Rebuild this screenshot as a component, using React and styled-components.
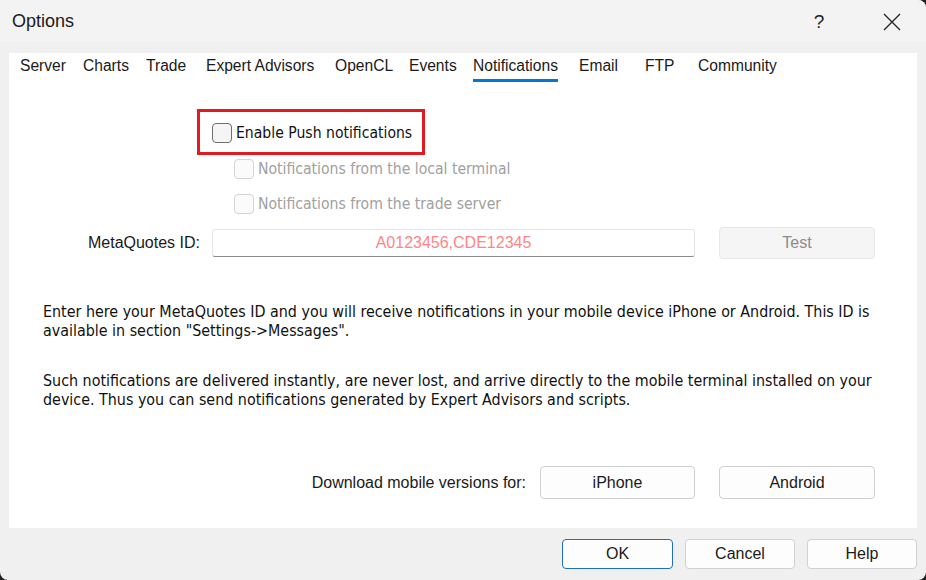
import styled, { createGlobalStyle } from 'styled-components';

const Global = createGlobalStyle`
    html, body {
        margin: 0;
        padding: 0;
        background: #202020;
    }
    #root {
        width: 926px;
        height: 580px;
    }
`

const UI = `"Liberation Sans", "Noto Sans", sans-serif`
const TAHOMA = `"DejaVu Sans Condensed", "DejaVu Sans", sans-serif`

const Window = styled.div`
    width: 926px;
    height: 580px;
    background: #f0f0f0;
    border-radius: 0 8px 8px 8px;
    overflow: hidden;
    display: flex;
    flex-direction: column;
    font-family: ${UI};
    color: #1a1a1a;
`

const TitleBar = styled.div`
    height: 43px;
    flex: none;
    background: #f3f3f3;
    display: flex;
    align-items: center;
    padding-left: 12px;
`

const Title = styled.div`
    font-size: 18px;
    flex: 1;
`

const TitleButton = styled.div`
    width: ${p => p.w}px;
    margin-right: ${p => p.mr || 0}px;
    display: flex;
    justify-content: center;
    align-items: center;
    font-size: 19px;
    color: #222;
`

const Panel = styled.div`
    margin: 10px 9px 0;
    height: 475px;
    flex: none;
    background: #fff;
    display: flex;
    flex-direction: column;
`

const TabBar = styled.div`
    height: 30px;
    display: flex;
    padding-left: 11px;
`

const Tab = styled.div`
    width: ${p => p.w}px;
    flex: none;
    padding-top: 4px;
    font-size: 15.6px;
    white-space: nowrap;
`

const TabLabel = styled.span`
    position: relative;
    display: inline-block;
    ${p => p.active && `
        &::after {
            content: '';
            position: absolute;
            left: 0;
            right: 0;
            top: 22px;
            height: 3px;
            background: #0078d4;
        }
    `}
`

const PushBox = styled.div`
    margin: 26px 0 0 188px;
    width: 228px;
    height: 46px;
    box-sizing: border-box;
    border: 3px solid #e11b22;
    display: flex;
    align-items: center;
    padding: 2px 0 0 12px;
`

const CheckRow = styled.label`
    display: flex;
    align-items: center;
    gap: 4px;
    height: 24px;
    margin: ${p => p.top}px 0 0 ${p => p.left}px;
    font-family: ${TAHOMA};
    font-size: 15.6px;
    color: ${p => p.disabled ? '#a0a0a0' : '#111'};
`

const Box = styled.span`
    width: 18px;
    height: 18px;
    border-radius: 4px;
    border: 1px solid ${p => p.disabled ? '#d4d4d4' : '#6e6e6e'};
    background: ${p => p.disabled ? '#fbfbfb' : '#f5f5f5'};
    flex: none;
`

const IdRow = styled.div`
    margin-top: 11px;
    height: 32px;
    display: flex;
    align-items: center;
`

const FieldLabel = styled.div`
    width: ${p => p.w}px;
    text-align: right;
    font-size: 16px;
    flex: none;
`

const Input = styled.div`
    margin-left: 12px;
    width: 483px;
    height: 28px;
    box-sizing: border-box;
    border: 1px solid #e6e6e6;
    border-bottom-color: #8a8a8a;
    border-radius: 3px;
    display: flex;
    align-items: center;
    justify-content: center;
    font-size: 16px;
    color: #ff8585;
`

const Button = styled.div`
    width: ${p => p.w}px;
    height: ${p => p.h || 33}px;
    margin-left: ${p => p.gap || 0}px;
    box-sizing: border-box;
    border: 1px solid ${p => p.primary ? '#1e6fc0' : p.disabled ? '#e8e8e8' : '#d0d0d0'};
    border-radius: 4px;
    background: ${p => p.disabled ? '#f5f5f5' : '#fdfdfd'};
    color: ${p => p.disabled ? '#8c8c8c' : '#1a1a1a'};
    display: flex;
    align-items: center;
    justify-content: center;
    font-size: 16px;
    flex: none;
`

const Paragraph = styled.p`
    margin: ${p => p.top}px 0 0 34px;
    font-family: ${TAHOMA};
    font-size: 15.9px;
    line-height: 19px;
    width: 860px;
    color: #111;
`

const DownloadRow = styled.div`
    margin-top: 57px;
    display: flex;
    align-items: center;
    height: 33px;
`

const Footer = styled.div`
    flex: 1;
    display: flex;
    justify-content: flex-end;
    align-items: flex-start;
    padding: 11px 9px 0 0;
    gap: 12px;
`

const CloseIcon = () => (
    <svg width="18" height="18" viewBox="0 0 18 18">
        <path d="M1 1 L17 17 M17 1 L1 17" stroke="#222" strokeWidth="1.3" fill="none" />
    </svg>
)

const tabs = [
    { name: 'Server', w: 63 },
    { name: 'Charts', w: 63 },
    { name: 'Trade', w: 60 },
    { name: 'Expert Advisors', w: 129 },
    { name: 'OpenCL', w: 74 },
    { name: 'Events', w: 64 },
    { name: 'Notifications', w: 106, active: true },
    { name: 'Email', w: 66 },
    { name: 'FTP', w: 53 },
    { name: 'Community', w: 90 },
]

export default function App() {
    return (
        <>
            <Global />
            <Window>
                <TitleBar>
                    <Title>Options</Title>
                    <TitleButton w={42} mr={28}>?</TitleButton>
                    <TitleButton w={48} mr={10}><CloseIcon /></TitleButton>
                </TitleBar>
                <Panel>
                    <TabBar>
                        {tabs.map(t => (
                            <Tab key={t.name} w={t.w}>
                                <TabLabel active={t.active}>{t.name}</TabLabel>
                            </Tab>
                        ))}
                    </TabBar>
                    <PushBox>
                        <CheckRow top={0} left={0}>
                            <Box />
                            Enable Push notifications
                        </CheckRow>
                    </PushBox>
                    <CheckRow disabled top={2} left={225}>
                        <Box disabled />
                        Notifications from the local terminal
                    </CheckRow>
                    <CheckRow disabled top={11} left={225}>
                        <Box disabled />
                        Notifications from the trade server
                    </CheckRow>
                    <IdRow>
                        <FieldLabel w={191}>MetaQuotes ID:</FieldLabel>
                        <Input>A0123456,CDE12345</Input>
                        <Button disabled w={156} h={32} gap={24}>Test</Button>
                    </IdRow>
                    <Paragraph top={43}>
                        Enter here your MetaQuotes ID and you will receive notifications in your mobile device iPhone or Android. This ID is available in section "Settings-&gt;Messages".
                    </Paragraph>
                    <Paragraph top={31}>
                        Such notifications are delivered instantly, are never lost, and arrive directly to the mobile terminal installed on your device. Thus you can send notifications generated by Expert Advisors and scripts.
                    </Paragraph>
                    <DownloadRow>
                        <FieldLabel w={517}>Download mobile versions for:</FieldLabel>
                        <Button w={155} gap={14}>iPhone</Button>
                        <Button w={156} gap={24}>Android</Button>
                    </DownloadRow>
                </Panel>
                <Footer>
                    <Button primary w={111} h={30}>OK</Button>
                    <Button w={110} h={30}>Cancel</Button>
                    <Button w={110} h={30}>Help</Button>
                </Footer>
            </Window>
        </>
    )
}
